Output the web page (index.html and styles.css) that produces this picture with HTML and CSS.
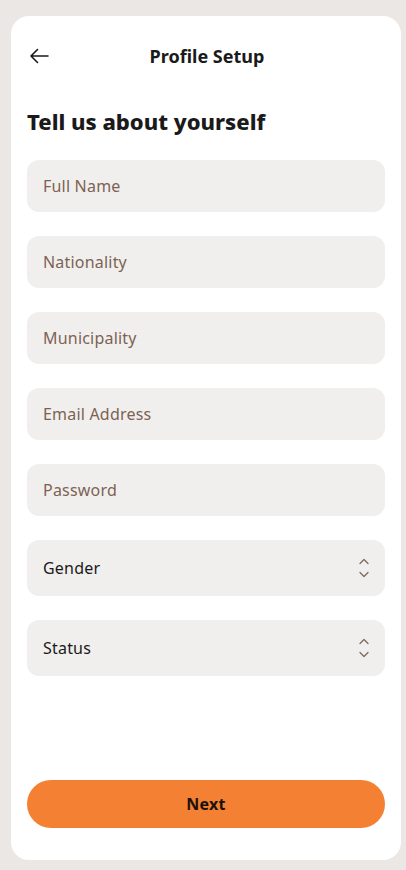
FILE: index.html
```html
<!DOCTYPE html>
<html>
<head>
<meta charset="utf-8">
<link rel="stylesheet" href="styles.css">
</head>
<body>
<div class="card">
  <header class="topbar">
    <button class="back" aria-label="Back">
      <svg width="20" height="16" viewBox="0 0 20 16"><path d="M19 8H2M8.5 1.5L2 8l6.5 6.5" fill="none" stroke="#1a1a1a" stroke-width="1.6" stroke-linecap="round" stroke-linejoin="round"/></svg>
    </button>
    <h1 class="title">Profile Setup</h1>
    <span class="spacer"></span>
  </header>
  <h2 class="heading">Tell us about yourself</h2>
  <form class="form">
    <div class="field"><span class="ph">Full Name</span></div>
    <div class="field"><span class="ph">Nationality</span></div>
    <div class="field"><span class="ph">Municipality</span></div>
    <div class="field"><span class="ph">Email Address</span></div>
    <div class="field"><span class="ph">Password</span></div>
    <div class="field select"><span class="val">Gender</span>
      <svg class="chev" width="14" height="22" viewBox="0 0 14 22"><path d="M3 6.5L7 2.5l4 4M3 15.5L7 19.5l4-4" fill="none" stroke="#7a6a60" stroke-width="1.3" stroke-linecap="round" stroke-linejoin="round"/></svg>
    </div>
    <div class="field select"><span class="val">Status</span>
      <svg class="chev" width="14" height="22" viewBox="0 0 14 22"><path d="M3 6.5L7 2.5l4 4M3 15.5L7 19.5l4-4" fill="none" stroke="#7a6a60" stroke-width="1.3" stroke-linecap="round" stroke-linejoin="round"/></svg>
    </div>
  </form>
  <button class="next">Next</button>
</div>
</body>
</html>
```
FILE: styles.css
```css
* { box-sizing: border-box; }
html, body { margin: 0; padding: 0; }
body {
  background: #ebe7e4;
  font-family: "Noto Sans", "Open Sans", sans-serif;
  color: #1a1a1a;
  width: 406px;
  height: 870px;
  padding: 16px 5px 10px 11px;
}
.card {
  background: #ffffff;
  border-radius: 18px;
  height: 844px;
  width: 390px;
  padding: 0 16px 32px 16px;
  display: flex;
  flex-direction: column;
}
.topbar {
  height: 80px;
  display: flex;
  align-items: center;
  justify-content: space-between;
}
.back {
  background: none;
  border: 0;
  padding: 0;
  width: 24px;
  height: 24px;
  display: flex;
  align-items: center;
  justify-content: flex-start;
  margin-left: 2px;
}
.spacer { width: 24px; }
.title {
  margin: 0;
  font-size: 18px;
  font-weight: 700;
}
.heading {
  margin: 9px 0 0 0;
  font-size: 22px;
  font-weight: 800;
  line-height: 32px;
  letter-spacing: 0;
}
.form {
  margin-top: 23px;
  display: flex;
  flex-direction: column;
  gap: 24px;
}
.field {
  height: 52px;
  background: #f1efed;
  border-radius: 12px;
  display: flex;
  align-items: center;
  padding: 0 16px;
  font-size: 16px;
  letter-spacing: 0.2px;
}
.ph { color: #7b6354; }
.select { height: 56px; justify-content: space-between; padding-right: 14px; }
.val { color: #1a1a1a; }
.chev { display: block; }
.next {
  margin-top: auto;
  height: 48px;
  border: 0;
  border-radius: 24px;
  background: #f38033;
  color: #1a1208;
  font-family: inherit;
  font-size: 16px;
  font-weight: 700;
  letter-spacing: 0.3px;
}
```
